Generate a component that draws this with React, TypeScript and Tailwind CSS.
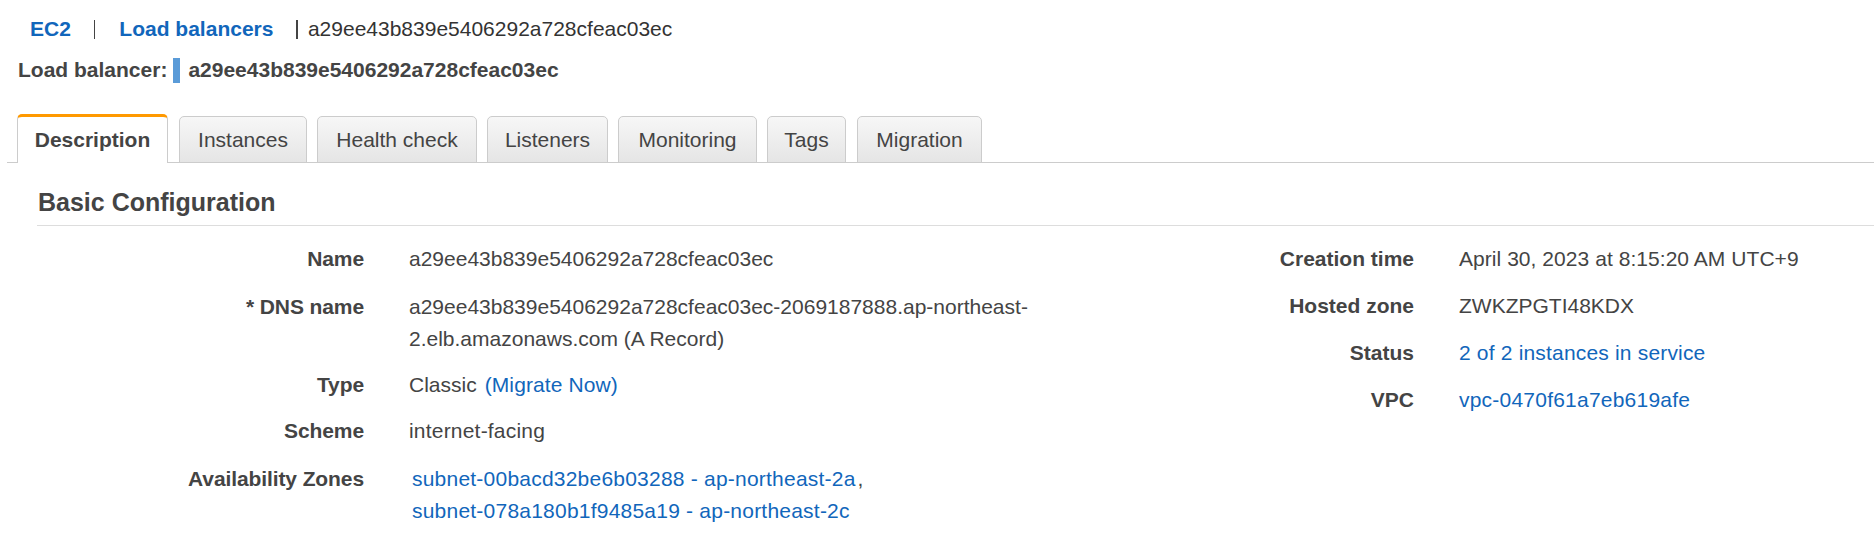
import React from "react";

const tabs = [
  { label: "Description", cls: "w-[151px] ml-0", active: true },
  { label: "Instances", cls: "w-[128px] ml-[11px]", active: false },
  { label: "Health check", cls: "w-[160px] ml-[10px]", active: false },
  { label: "Listeners", cls: "w-[121px] ml-[10px]", active: false },
  { label: "Monitoring", cls: "w-[139px] ml-[10px]", active: false },
  { label: "Tags", cls: "w-[79px] ml-[10px]", active: false },
  { label: "Migration", cls: "w-[125px] ml-[11px]", active: false },
];

function Link({ children, className = "" }: { children: React.ReactNode; className?: string }) {
  return <a className={"text-[#1166bb] cursor-pointer " + className}>{children}</a>;
}

function LeftRow({
  label,
  children,
  rowCls = "py-[8px]",
}: {
  label: string;
  children: React.ReactNode;
  rowCls?: string;
}) {
  return (
    <div className={"flex leading-[32px] " + rowCls}>
      <div className="w-[327px] shrink-0 text-right font-bold tracking-[-0.1px]">{label}</div>
      <div className="ml-[45px] whitespace-nowrap">{children}</div>
    </div>
  );
}

function RightRow({ label, children }: { label: string; children: React.ReactNode }) {
  return (
    <div className="flex leading-[31px] py-[8px]">
      <div className="w-[377px] shrink-0 text-right font-bold">{label}</div>
      <div className="ml-[45px] whitespace-nowrap">{children}</div>
    </div>
  );
}

export default function App() {
  return (
    <div className="w-[1874px] h-[554px] bg-white overflow-hidden font-['Liberation_Sans',Arial,Helvetica,sans-serif] text-[21px] text-[#444]">
      {/* Breadcrumb */}
      <div className="pt-[14px]">
        <div className="flex items-center h-[30px] leading-[30px] pl-[30px]">
          <Link className="font-bold">EC2</Link>
          <span className="ml-[23px] w-[1.5px] h-[19px] bg-[#444]"></span>
          <Link className="ml-[24px] font-bold">Load balancers</Link>
          <span className="ml-[23px] w-[1.5px] h-[19px] bg-[#444]"></span>
          <span className="ml-[10px] text-[#333]">a29ee43b839e5406292a728cfeac03ec</span>
        </div>

        {/* Title line */}
        <div className="flex items-center h-[30px] leading-[30px] mt-[11px] pl-[18px]">
          <span className="font-bold">Load balancer:</span>
          <span className="ml-[6px] w-[7px] h-[25px] bg-[#5a9bd8]"></span>
          <span className="ml-[8px] font-bold">a29ee43b839e5406292a728cfeac03ec</span>
        </div>
      </div>

      {/* Tabs */}
      <div className="mt-[29px] ml-[7px] pl-[10px] flex items-end border-b border-[#cccccc]">
        {tabs.map((t) =>
          t.active ? (
            <div
              key={t.label}
              className={
                t.cls +
                " h-[49px] -mb-px flex items-center justify-center bg-white border-t-[3px] border-t-[#ff9900] border-x border-x-[#cccccc] rounded-t-[5px] font-bold text-[#444]"
              }
            >
              {t.label}
            </div>
          ) : (
            <div
              key={t.label}
              className={
                t.cls +
                " h-[47px] -mb-px flex items-center justify-center bg-gradient-to-b from-[#f7f7f7] to-[#e5e5e5] border border-[#cccccc] rounded-t-[5px] text-[#444]"
              }
            >
              {t.label}
            </div>
          )
        )}
      </div>

      {/* Section heading */}
      <div className="ml-[37px] mt-[24px] pb-[8px] border-b border-[#dddddd]">
        <h2 className="pl-[1px] text-[25px] leading-[30px] font-bold text-[#444]">Basic Configuration</h2>
      </div>

      {/* Details */}
      <div className="flex mt-[9px]">
        <div className="ml-[37px] w-[1000px] shrink-0">
          <LeftRow label="Name">a29ee43b839e5406292a728cfeac03ec</LeftRow>
          <LeftRow label="* DNS name">
            <div>a29ee43b839e5406292a728cfeac03ec-2069187888.ap-northeast-</div>
            <div>2.elb.amazonaws.com (A Record)</div>
          </LeftRow>
          <LeftRow label="Type" rowCls="py-[6px]">
            Classic
            <Link className="ml-[8px] tracking-[0.1px]">(Migrate Now)</Link>
          </LeftRow>
          <LeftRow label="Scheme">
            <span className="tracking-[0.2px]">internet-facing</span>
          </LeftRow>
          <LeftRow label="Availability Zones">
            <div className="ml-[3px]">
              <Link className="tracking-[0.22px]">subnet-00bacd32be6b03288 - ap-northeast-2a</Link>
              <span className="ml-[2px]">,</span>
            </div>
            <div className="ml-[3px]">
              <Link className="tracking-[0.22px]">subnet-078a180b1f9485a19 - ap-northeast-2c</Link>
            </div>
          </LeftRow>
        </div>

        <div className="flex-1">
          <RightRow label="Creation time">
            <span className="tracking-[0.05px]">April 30, 2023 at 8:15:20 AM UTC+9</span>
          </RightRow>
          <RightRow label="Hosted zone">ZWKZPGTI48KDX</RightRow>
          <RightRow label="Status">
            <Link className="tracking-[0.18px]">2 of 2 instances in service</Link>
          </RightRow>
          <RightRow label="VPC">
            <Link className="tracking-[0.22px]">vpc-0470f61a7eb619afe</Link>
          </RightRow>
        </div>
      </div>
    </div>
  );
}
